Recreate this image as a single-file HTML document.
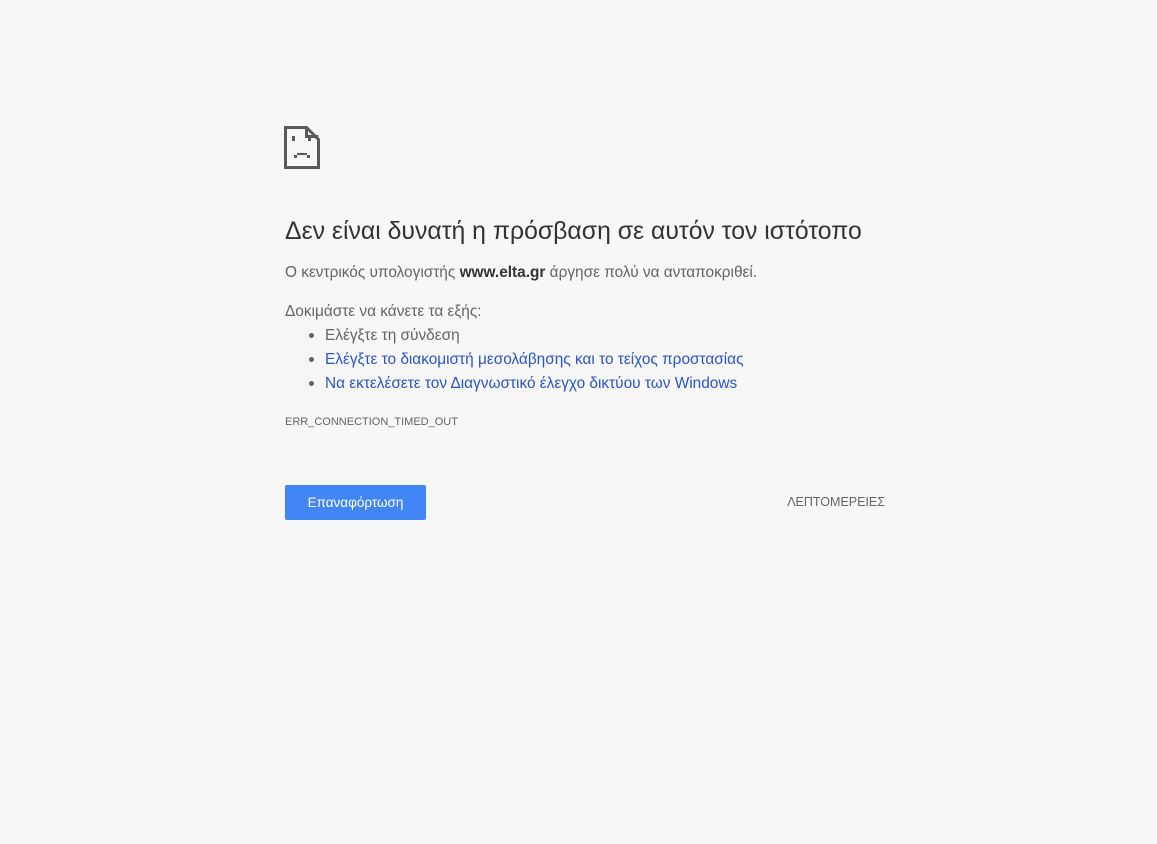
<!DOCTYPE html>
<html><head><meta charset="utf-8"><style>
body{margin:0;background:#f7f7f7;width:1157px;height:844px;position:relative;font-family:"Liberation Sans","DejaVu Sans",sans-serif;overflow:hidden}
.a{position:absolute;white-space:nowrap}
h1{position:absolute;left:285px;top:218px;margin:0;font-weight:normal;font-size:24.8px;color:#333;white-space:nowrap}
.t{font-size:15.4px;color:#646464}
.l{color:#2a55c8}
.dot{position:absolute;width:5px;height:5px;border-radius:50%;background:#646464}
.btn{position:absolute;left:285px;top:485px;width:141px;height:35px;background:#4285f4;border-radius:2px;color:#fff;font-size:13.5px;text-align:center;line-height:35px}
</style></head><body>
<svg class="a" style="left:282px;top:122px" width="40" height="50" viewBox="0 0 40 50">
<path d="M3.5 5.5H24.5L36.5 17.5V45.5H3.5Z" fill="none" stroke="#5a5a5a" stroke-width="3"/>
<path d="M24.5 5.5V14.5H36.5" fill="none" stroke="#5a5a5a" stroke-width="3"/>
<rect x="10" y="14" width="3" height="5" fill="#5a5a5a"/>
<rect x="26" y="14" width="3" height="5" fill="#5a5a5a"/>
<rect x="15" y="31" width="10" height="2" fill="#5a5a5a"/>
<rect x="12" y="33" width="3" height="3" fill="#5a5a5a"/>
<rect x="25" y="33" width="3" height="3" fill="#5a5a5a"/>
</svg>
<h1>Δεν είναι δυνατή η πρόσβαση σε αυτόν τον ιστότοπο</h1>
<div class="a t" style="left:285px;top:264px">Ο κεντρικός υπολογιστής <b style="color:#333">www.elta.gr</b> άργησε πολύ να ανταποκριθεί.</div>
<div class="a t" style="left:285px;top:303px">Δοκιμάστε να κάνετε τα εξής:</div>
<div class="dot" style="left:309px;top:333px"></div>
<div class="a t" style="left:325px;top:327px">Ελέγξτε τη σύνδεση</div>
<div class="dot" style="left:309px;top:357px"></div>
<div class="a t l" style="left:325px;top:351px">Ελέγξτε το διακομιστή μεσολάβησης και το τείχος προστασίας</div>
<div class="dot" style="left:309px;top:381px"></div>
<div class="a t l" style="left:325px;top:375px">Να εκτελέσετε τον Διαγνωστικό έλεγχο δικτύου των Windows</div>
<div class="a" style="left:285px;top:416px;font-size:11px;color:#646464">ERR_CONNECTION_TIMED_OUT</div>
<div class="btn">Επαναφόρτωση</div>
<div class="a" style="right:272px;top:495px;font-size:12.5px;color:#646464">ΛΕΠΤΟΜΕΡΕΙΕΣ</div>
</body></html>
